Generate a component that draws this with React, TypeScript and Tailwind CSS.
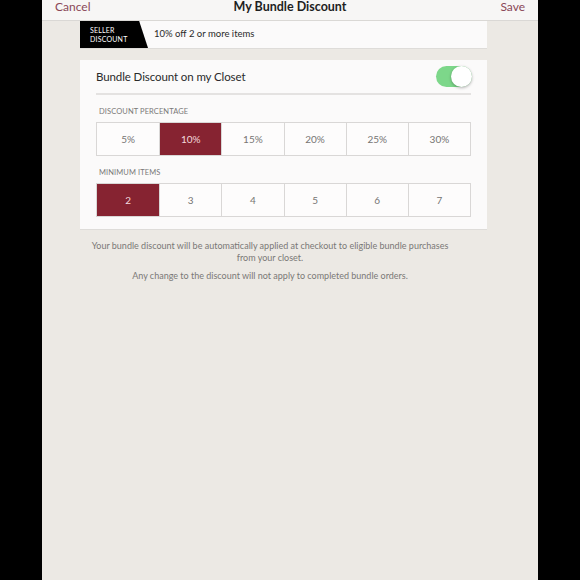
import React from "react";

const pct = ["5%", "10%", "15%", "20%", "25%", "30%"];
const items = ["2", "3", "4", "5", "6", "7"];

function Segments({ values, selected }: { values: string[]; selected: string }) {
  return (
    <div className="grid grid-cols-6 h-[34px] border border-[#d9d7d6]">
      {values.map((v, i) => (
        <div
          key={v}
          className={
            "flex items-center justify-center text-[10px] " +
            (i > 0 ? "border-l border-[#d9d7d6] " : "") +
            (v === selected ? "bg-[#862331] text-[#f3d9dc]" : "bg-[#fdfcfc] text-[#767473]")
          }
        >
          {v}
        </div>
      ))}
    </div>
  );
}

export default function App() {
  return (
    <div
      className="w-[580px] h-[580px] bg-black flex justify-center"
      style={{ fontFamily: "Lato, 'Open Sans', sans-serif" }}
    >
      <div className="w-[496px] h-full bg-[#ece9e4] flex flex-col">
        <div className="h-[21px] bg-[#f7f6f5] border-b border-[#dad8d5] grid grid-cols-[1fr_auto_1fr] items-start px-[13px]">
          <span className="text-[12px] leading-[14px] text-[#8a4757] justify-self-start">Cancel</span>
          <span className="text-[12.5px] leading-[14px] font-bold text-[#1e1e1e]">My Bundle Discount</span>
          <span className="text-[12px] leading-[14px] text-[#8a4757] justify-self-end">Save</span>
        </div>

        <div className="ml-[38px] mr-[51px] h-[28px] bg-[#fbfafa] border-b border-[#dedcd9] flex items-center">
          <div className="w-[68px] h-full bg-black [clip-path:polygon(0_0,87%_0,100%_100%,0_100%)] flex flex-col justify-center pl-[10px]">
            <span className="text-[7px] leading-[9px] text-white tracking-[0.2px]">SELLER</span>
            <span className="text-[7px] leading-[9px] text-white tracking-[0.2px]">DISCOUNT</span>
          </div>
          <span className="ml-[6px] text-[9.5px] text-[#2a2a2a]">10% off 2 or more items</span>
        </div>

        <div className="ml-[38px] mr-[51px] mt-[11px] bg-[#fbfafa] border-b border-[#dedcd9] px-[16px] pb-[12px]">
          <div className="h-[33px] flex items-center justify-between">
            <span className="text-[11.5px] text-[#2a2a2a] tracking-[-0.1px]">Bundle Discount on my Closet</span>
            <div className="w-[36px] h-[21px] rounded-full bg-[#7dd78a] relative mr-[-1px] -mt-[1px]">
              <div className="absolute right-0 top-0 w-[21px] h-[21px] rounded-full bg-white shadow-[0_1px_3px_rgba(0,0,0,0.3)]" />
            </div>
          </div>
          <div className="h-[2px] bg-[#e4e2e1]" />
          <div className="mt-[12px] mb-[5px] pl-[3px] text-[7.5px] leading-[10px] text-[#7a7877] tracking-[0.1px]">
            DISCOUNT PERCENTAGE
          </div>
          <Segments values={pct} selected="10%" />
          <div className="mt-[12px] mb-[5px] pl-[3px] text-[7.5px] leading-[10px] text-[#7a7877] tracking-[0.1px]">
            MINIMUM ITEMS
          </div>
          <Segments values={items} selected="2" />
        </div>

        <div className="ml-[43px] w-[370px] mt-[10px] text-center text-[9px] leading-[12px] text-[#7a7876]">
          <p>Your bundle discount will be automatically applied at checkout to eligible bundle purchases from your closet.</p>
          <p className="mt-[6px]">Any change to the discount will not apply to completed bundle orders.</p>
        </div>
      </div>
    </div>
  );
}
